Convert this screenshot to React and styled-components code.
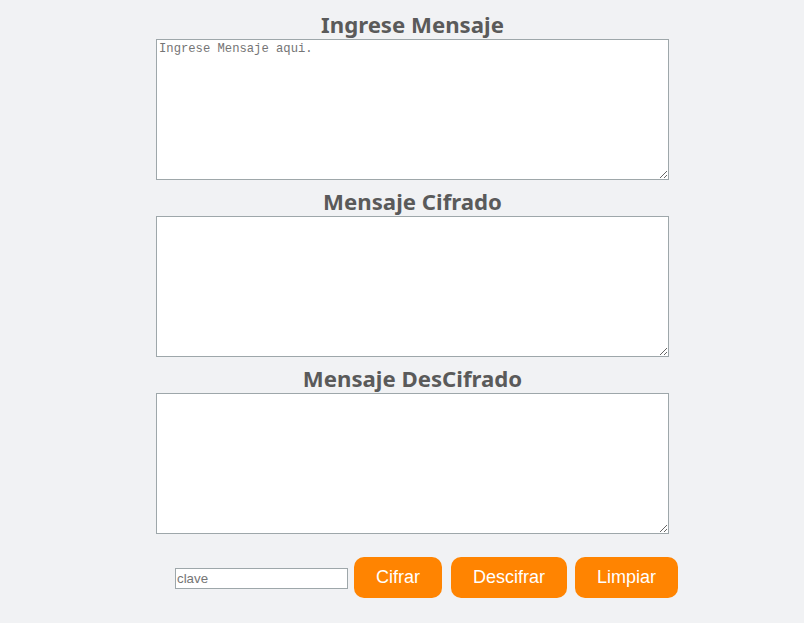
import React from "react";
import styled, { createGlobalStyle } from "styled-components";

const Global = createGlobalStyle`
  html, body { margin: 0; padding: 0; background: #f1f2f4; }
  body { font-family: "Noto Sans", "Liberation Sans", sans-serif; }
`;

const Page = styled.div`
  padding: 3px 0 0 156px;
`;

const Column = styled.div`
  width: 513px;
  display: flex;
  flex-direction: column;
`;

const Heading = styled.h2`
  margin: 0;
  padding-top: 7px;
  line-height: 29px;
  font-size: 22.2px;
  font-weight: 700;
  color: #5a5a5a;
  text-align: center;
`;

const Area = styled.textarea`
  box-sizing: border-box;
  width: 513px;
  height: 141px;
  margin: 0;
  padding: 2px;
  border: 1px solid #9ea7aa;
  background: #fff;
  font-family: "Liberation Mono", "DejaVu Sans Mono", monospace;
  font-size: 12.2px;
  color: #333;
  display: block;
  &::placeholder { color: #757575; }
`;

const Controls = styled.div`
  display: flex;
  align-items: center;
  margin: 23px 0 0 19px;
`;

const KeyInput = styled.input`
  box-sizing: border-box;
  width: 173px;
  height: 21px;
  margin: 1px 6px 0 0;
  padding: 1px 1px;
  border: 1px solid #9ea7aa;
  background: #fff;
  font-family: "Liberation Sans", Arial, sans-serif;
  font-size: 13.3px;
  &::placeholder { color: #757575; }
`;

const Button = styled.button`
  height: 41px;
  padding: 0 22px;
  margin-right: ${(p) => p.$gap || 0}px;
  border: none;
  border-radius: 10px;
  background: #ff8401;
  color: #fff;
  font-family: "Liberation Sans", Arial, sans-serif;
  font-size: 18px;
  cursor: pointer;
`;

export default function App() {
  return (
    <>
      <Global />
      <Page>
        <Column>
          <Heading>Ingrese Mensaje</Heading>
          <Area placeholder="Ingrese Mensaje aqui." />
          <Heading>Mensaje Cifrado</Heading>
          <Area />
          <Heading>Mensaje DesCifrado</Heading>
          <Area />
        </Column>
        <Controls>
          <KeyInput placeholder="clave" />
          <Button $gap={9}>Cifrar</Button>
          <Button $gap={8}>Descifrar</Button>
          <Button>Limpiar</Button>
        </Controls>
      </Page>
    </>
  );
}
